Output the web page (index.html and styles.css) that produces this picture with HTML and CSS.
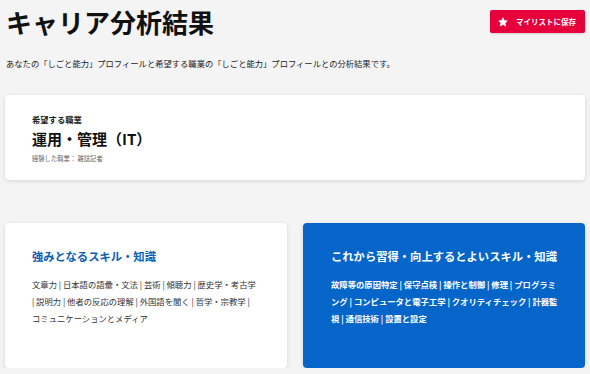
FILE: index.html
```html
<!DOCTYPE html>
<html lang="ja">
<head>
<meta charset="utf-8">
<title>キャリア分析結果</title>
<link rel="stylesheet" href="styles.css">
</head>
<body>
<div class="page">
  <header class="header">
    <h1 class="title">キャリア分析結果</h1>
    <button class="save-btn" type="button">
      <svg class="star" viewBox="0 0 24 24" width="10" height="10" aria-hidden="true"><path d="M12 1.8l3.1 6.6 7.2.9-5.3 5 1.4 7.1L12 17.9l-6.4 3.5 1.4-7.1-5.3-5 7.2-.9z" fill="#fff" stroke="#fff" stroke-width="1.6" stroke-linejoin="round"/></svg>
      <span>マイリストに保存</span>
    </button>
  </header>
  <p class="lead">あなたの「しごと能力」プロフィールと希望する職業の「しごと能力」プロフィールとの分析結果です。</p>

  <section class="card job-card">
    <div class="job-label">希望する職業</div>
    <div class="job-name">運用・管理（IT）</div>
    <div class="job-exp">経験した職業： 雑誌記者</div>
  </section>

  <div class="skills">
    <section class="card skill-card">
      <h2 class="skill-title">強みとなるスキル・知識</h2>
      <p class="skill-list">文章力 | 日本語の語彙・文法 | 芸術 | 傾聴力 | 歴史学・考古学 | 説明力 | 他者の反応の理解 | 外国語を聞く | 哲学・宗教学 | コミュニケーションとメディア</p>
    </section>
    <section class="card skill-card skill-card--blue">
      <h2 class="skill-title">これから習得・向上するとよいスキル・知識</h2>
      <p class="skill-list">故障等の原因特定 | 保守点検 | 操作と制御 | 修理 | プログラミング | コンピュータと電子工学 | クオリティチェック | 計器監視 | 通信技術 | 設置と設定</p>
    </section>
  </div>
</div>
</body>
</html>
```

FILE: styles.css
```css
* { box-sizing: border-box; }

html, body {
  margin: 0;
  padding: 0;
  background: #f4f4f4;
}

body {
  font-family: "Noto Sans CJK JP", "Noto Sans", sans-serif;
  color: #222;
}

.page {
  padding: 0 5px;
}

.header {
  display: flex;
  justify-content: space-between;
  align-items: flex-start;
  padding-top: 4px;
}

.title {
  margin: 0;
  padding-left: 1px;
  font-size: 26px;
  line-height: 36px;
  font-weight: 700;
  color: #111;
}

.save-btn {
  margin-top: 6px;
  display: flex;
  align-items: center;
  gap: 8px;
  height: 23px;
  width: 95px;
  padding: 0 0 0 8px;
  border: none;
  border-radius: 2px;
  background: #e6003b;
  color: #fff;
  font-family: inherit;
  font-size: 7.5px;
  font-weight: 700;
  cursor: pointer;
  box-shadow: 0 1px 2px rgba(0,0,0,0.15);
}

.star { display: block; flex: none; }

.lead {
  margin: 16px 0 0;
  padding-left: 1px;
  font-size: 8.3px;
  line-height: 14px;
  color: #222;
}

.card {
  background: #fff;
  border-radius: 4px;
  box-shadow: 0 1px 4px rgba(0,0,0,0.13);
}

.job-card {
  margin-top: 25px;
  padding: 18px 27px 16px;
}

.job-label {
  font-size: 8.3px;
  line-height: 12px;
  font-weight: 700;
  color: #222;
}

.job-name {
  margin-top: 4px;
  font-size: 15px;
  line-height: 20px;
  font-weight: 700;
  color: #111;
}

.job-exp {
  margin-top: 5px;
  font-size: 6.3px;
  line-height: 10px;
  color: #666;
}

.skills {
  margin-top: 43px;
  display: grid;
  grid-template-columns: 1fr 1fr;
  gap: 16px;
}

.skill-card {
  min-height: 145px;
  padding: 25px 28px 20px 27px;
}

.skill-title {
  margin: 0;
  font-size: 11.3px;
  line-height: 16px;
  font-weight: 700;
  color: #0a5eb4;
}

.skill-list {
  margin: 12px 0 0;
  font-size: 8.33px;
  line-height: 17px;
  color: #333;
}

.skill-card--blue {
  padding-left: 28px;
  padding-right: 26px;
  background: #0565c9;
}

.skill-card--blue .skill-title {
  color: #fff;
}

.skill-card--blue .skill-list {
  color: #fff;
  font-weight: 700;
}
```
